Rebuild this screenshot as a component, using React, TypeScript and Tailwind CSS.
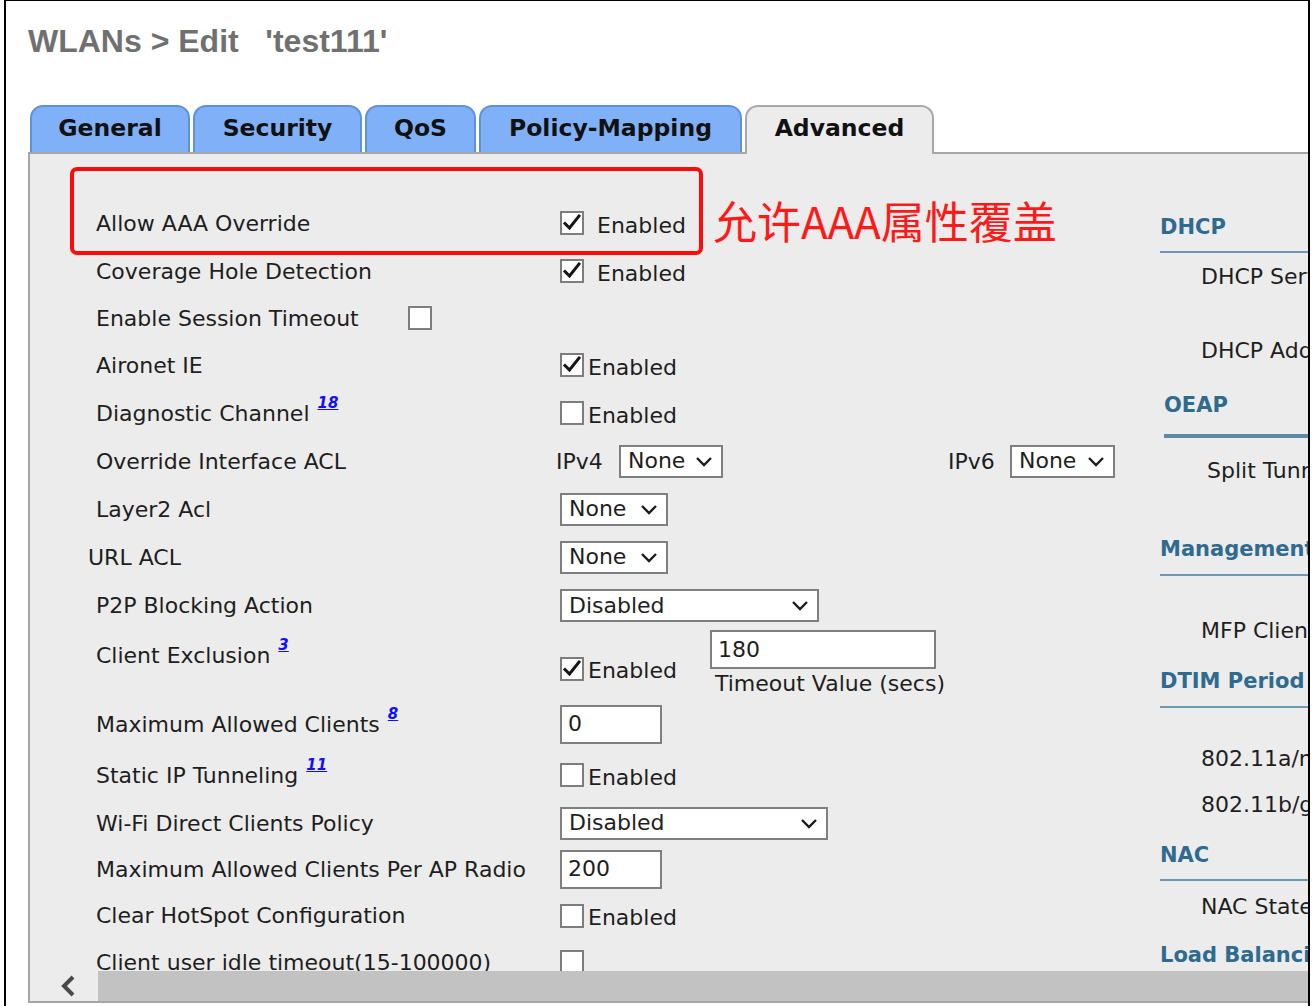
import React from "react";

const LF = "font-['DejaVu_Sans',sans-serif]";

function Check({ checked }: { checked?: boolean }) {
  return (
    <span className="inline-flex w-[24px] h-[24px] shrink-0 border-2 border-[#7d7d7d] bg-white items-center justify-center">
      {checked && (
        <svg width="20" height="20" viewBox="0 0 20 20">
          <path d="M3 10.5 L7.5 15 L17 3" fill="none" stroke="#151515" strokeWidth="3" strokeLinecap="square" />
        </svg>
      )}
    </span>
  );
}

function Select({ value, w }: { value: string; w: string }) {
  return (
    <div className={`flex items-center justify-between h-[33px] border-2 border-[#7f7f7f] bg-white pl-[7px] pr-[8px] shrink-0 ${w}`}>
      <span className="leading-none">{value}</span>
      <svg width="18" height="11" viewBox="0 0 18 11">
        <polyline points="2,2 9,9 16,2" fill="none" stroke="#1a1a1a" strokeWidth="2.4" />
      </svg>
    </div>
  );
}

function Input({ value, w, h }: { value: string; w: string; h: string }) {
  return (
    <div className={`flex items-center border-2 border-[#7f7f7f] bg-white pl-[6px] ${w} ${h}`}>
      <span className="leading-none">{value}</span>
    </div>
  );
}

function Sup({ n }: { n: string }) {
  return (
    <span className="relative -top-[10px] ml-[8px] text-[15px] font-bold italic underline text-[#1010ff] leading-none">{n}</span>
  );
}

function Row({ h, label, children, labelClass = "pl-[66px]", align = "items-center" }: { h: string; label: React.ReactNode; children?: React.ReactNode; labelClass?: string; align?: string }) {
  return (
    <div className={`flex ${align} ${h}`}>
      <div className={`w-[530px] shrink-0 flex items-center whitespace-nowrap ${labelClass}`}>{label}</div>
      <div className="flex items-center whitespace-nowrap">{children}</div>
    </div>
  );
}

function Tab({ label, w, active }: { label: string; w: string; active?: boolean }) {
  if (active) {
    return (
      <div className={`relative z-10 -mb-[2px] h-[49px] ${w} rounded-t-[13px] border-2 border-b-0 border-[#a9a9a9] bg-[#ececec] flex items-center justify-center pb-[3px]`}>
        <span className="text-[23.5px] font-bold text-[#111]">{label}</span>
      </div>
    );
  }
  return (
    <div className={`h-[47px] ${w} rounded-t-[13px] border-2 border-b-0 border-[#5f91d8] bg-[#80b1f8] flex items-center justify-center pb-[2px]`}>
      <span className="text-[23.5px] font-bold text-[#111]">{label}</span>
    </div>
  );
}

function RHead({ text, mt, ml = "ml-0" }: { text: string; mt: string; ml?: string }) {
  return <div className={`${mt} ${ml} h-[24px] leading-[24px] text-[21px] font-bold text-[#2f6a8f] whitespace-nowrap`}>{text}</div>;
}
function RLine({ mt, h = "h-[2px]", ml = "ml-0", c = "bg-[#6f98b5]" }: { mt: string; h?: string; ml?: string; c?: string }) {
  return <div className={`${mt} ${ml} ${h} ${c}`} />;
}
function RItem({ text, mt, ml = "ml-[41px]" }: { text: string; mt: string; ml?: string }) {
  return <div className={`${mt} ${ml} h-[24px] leading-[24px] whitespace-nowrap text-[#1e1e1e]`}>{text}</div>;
}

export default function App() {
  return (
    <div className="w-[1312px] h-[1006px] bg-white overflow-hidden">
      <div className={`ml-[4px] w-[1306px] h-[1006px] border-l-2 border-r-2 border-t border-black overflow-hidden ${LF}`}>
        <div className="pl-[22px] pt-[22px] h-[58px] leading-[36px] text-[32px] font-bold text-[#707070] font-['Liberation_Sans',Arial,sans-serif] whitespace-pre">
          {"WLANs > Edit   'test111'"}
        </div>
        <div className="mt-[46px] pl-[24px] flex items-end gap-[3px]">
          <Tab label="General" w="w-[160px]" />
          <Tab label="Security" w="w-[169px]" />
          <Tab label="QoS" w="w-[111px]" />
          <Tab label="Policy-Mapping" w="w-[263px]" />
          <Tab label="Advanced" w="w-[189px]" active />
        </div>
        <div className="ml-[22px] w-[1300px] border-2 border-r-0 border-[#a6a6a6] bg-[#ececec] flex flex-col">
          <div className="relative h-[817px] overflow-hidden flex text-[22px] text-[#1e1e1e]">
            <div className="w-[1130px] shrink-0 pt-[45px]">
              <Row h="h-[48px]" label="Allow AAA Override">
                <Check checked />
                <span className="ml-[13px] mt-[4px]">Enabled</span>
              </Row>
              <Row h="h-[48px]" label="Coverage Hole Detection">
                <Check checked />
                <span className="ml-[13px] mt-[4px]">Enabled</span>
              </Row>
              <Row h="h-[46px]" label={<><span>Enable Session Timeout</span><span className="ml-[49px] flex"><Check /></span></>} />
              <Row h="h-[48px]" label="Aironet IE">
                <Check checked />
                <span className="ml-[4px] mt-[4px]">Enabled</span>
              </Row>
              <Row h="h-[48px]" label={<><span>Diagnostic Channel</span><Sup n="18" /></>}>
                <Check />
                <span className="ml-[4px] mt-[4px]">Enabled</span>
              </Row>
              <Row h="h-[48px]" label="Override Interface ACL">
                <span className="-ml-[4px] w-[63px] shrink-0">IPv4</span>
                <Select value="None" w="w-[104px]" />
                <span className="ml-[225px] w-[62px] shrink-0">IPv6</span>
                <Select value="None" w="w-[105px]" />
              </Row>
              <Row h="h-[48px]" label="Layer2 Acl">
                <Select value="None" w="w-[108px]" />
              </Row>
              <Row h="h-[48px]" label="URL ACL" labelClass="pl-[58px]">
                <Select value="None" w="w-[108px]" />
              </Row>
              <Row h="h-[49px]" label="P2P Blocking Action">
                <Select value="Disabled" w="w-[259px]" />
              </Row>
              <div className="flex items-start h-[68px]">
                <div className="w-[530px] shrink-0 pl-[66px] mt-[13px] flex items-center h-[24px] whitespace-nowrap">
                  <span>Client Exclusion</span>
                  <Sup n="3" />
                </div>
                <div className="flex items-start whitespace-nowrap">
                  <div className="flex items-center mt-[20px] w-[150px] shrink-0">
                    <Check checked />
                    <span className="ml-[4px] mt-[4px]">Enabled</span>
                  </div>
                  <div className="flex flex-col">
                    <Input value="180" w="w-[226px]" h="h-[39px]" />
                    <span className="ml-[5px] mt-[3px] leading-[24px]">Timeout Value (secs)</span>
                  </div>
                </div>
              </div>
              <Row h="h-[52px]" label={<><span>Maximum Allowed Clients</span><Sup n="8" /></>}>
                <Input value="0" w="w-[102px]" h="h-[39px]" />
              </Row>
              <Row h="h-[50px]" label={<><span>Static IP Tunneling</span><Sup n="11" /></>}>
                <Check />
                <span className="ml-[4px] mt-[4px]">Enabled</span>
              </Row>
              <Row h="h-[46px]" label="Wi-Fi Direct Clients Policy">
                <Select value="Disabled" w="w-[268px]" />
              </Row>
              <Row h="h-[46px]" label="Maximum Allowed Clients Per AP Radio">
                <Input value="200" w="w-[102px]" h="h-[39px]" />
              </Row>
              <Row h="h-[47px]" label="Clear HotSpot Configuration">
                <Check />
                <span className="ml-[4px] mt-[4px]">Enabled</span>
              </Row>
              <Row h="h-[46px]" label="Client user idle timeout(15-100000)">
                <Check />
              </Row>
            </div>
            <div className="flex-1 flex flex-col overflow-hidden">
              <RHead text="DHCP" mt="mt-[61px]" />
              <RLine mt="mt-[12px]" />
              <RItem text="DHCP Server Override" mt="mt-[12px]" />
              <RItem text="DHCP Addr. Assignment" mt="mt-[50px]" />
              <RHead text="OEAP" mt="mt-[30px]" ml="ml-[4px]" />
              <RLine mt="mt-[17px]" ml="ml-[4px]" h="h-[4px]" c="bg-[#5d88a6]" />
              <RItem text="Split Tunnel" mt="mt-[21px]" ml="ml-[47px]" />
              <RHead text="Management Frame Protection (MFP)" mt="mt-[54px]" />
              <RLine mt="mt-[13px]" />
              <RItem text="MFP Client Protection" mt="mt-[43px]" />
              <RHead text="DTIM Period (in beacon intervals)" mt="mt-[26px]" />
              <RLine mt="mt-[13px]" />
              <RItem text="802.11a/n (1 - 255)" mt="mt-[39px]" />
              <RItem text="802.11b/g/n (1 - 255)" mt="mt-[22px]" />
              <RHead text="NAC" mt="mt-[26px]" />
              <RLine mt="mt-[12px]" />
              <RItem text="NAC State" mt="mt-[14px]" />
              <RHead text="Load Balancing and Band Select" mt="mt-[24px]" />
            </div>
            <div className="absolute left-[40px] top-[13px] w-[633px] h-[88px] border-[4px] border-[#ff0a0a] rounded-[7px]" />
            <div className="absolute left-[683px] top-[40px] text-[44px] leading-[52px] text-[#ff1a1a] font-['Noto_Sans_CJK_SC',sans-serif] whitespace-nowrap">
              允许AAA属性覆盖
            </div>
          </div>
          <div className="h-[30px] flex bg-[#ececec]">
            <div className="w-[68px] flex items-center justify-center pl-[8px]">
              <svg width="18" height="22" viewBox="0 0 18 22">
                <polyline points="14,2 5,11 14,20" fill="none" stroke="#4a4a4a" strokeWidth="4" />
              </svg>
            </div>
            <div className="flex-1 bg-[#c2c2c2]" />
          </div>
        </div>
      </div>
    </div>
  );
}
